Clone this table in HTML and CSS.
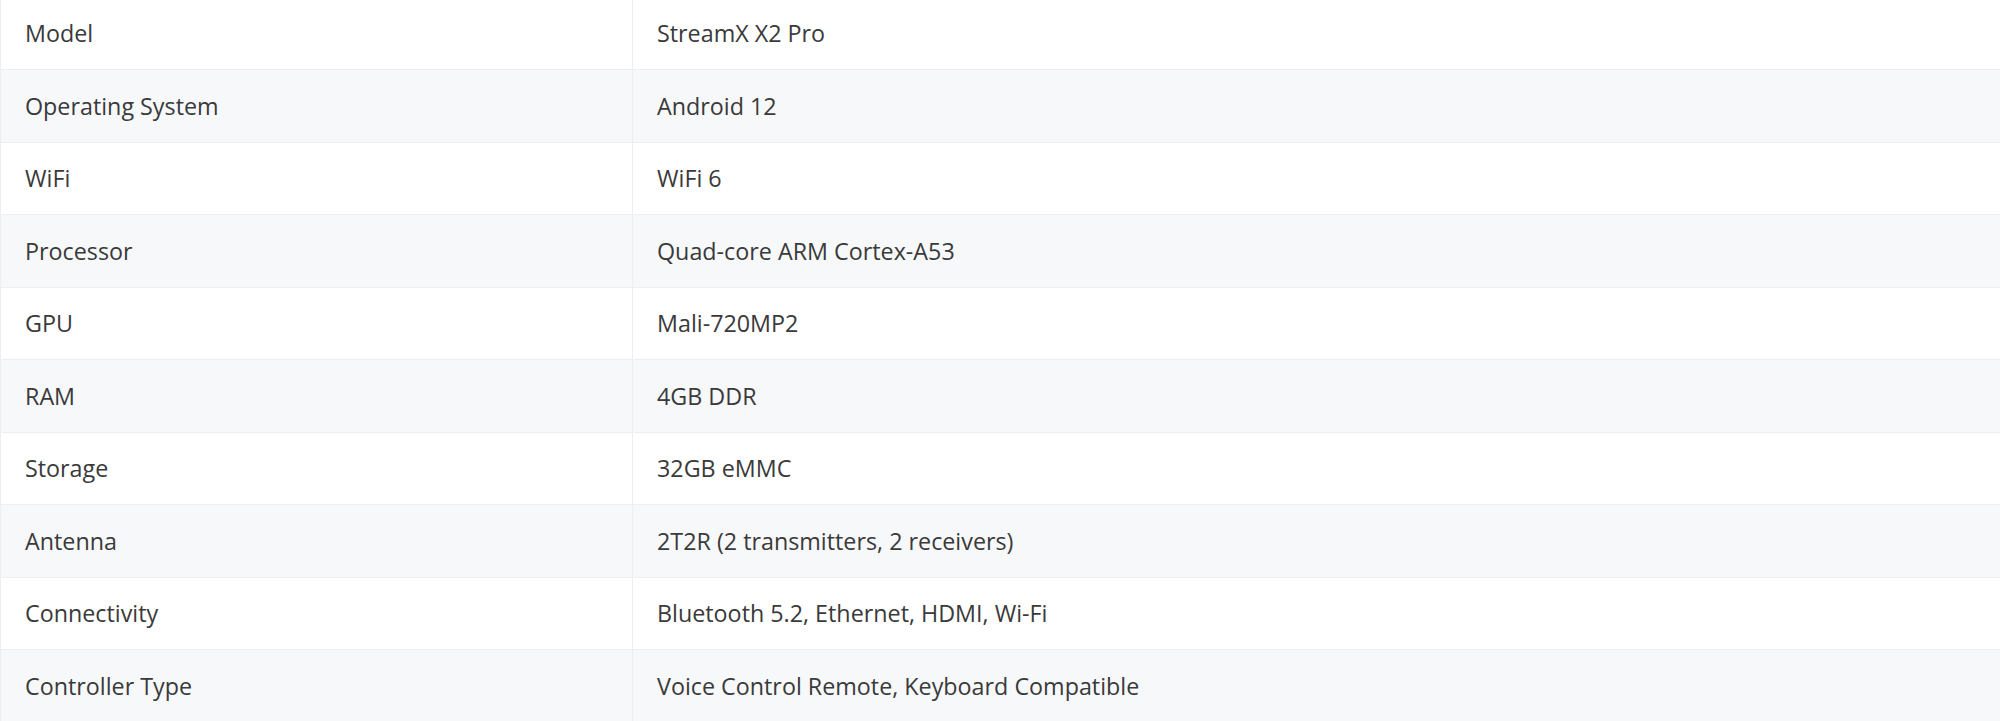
FILE: index.html
```html
<!DOCTYPE html>
<html lang="en">
<head>
<meta charset="utf-8">
<title>Specifications</title>
<link rel="stylesheet" href="styles.css">
</head>
<body>
<div class="specs">
  <div class="row"><div class="key">Model</div><div class="val">StreamX X2 Pro</div></div>
  <div class="row alt"><div class="key">Operating System</div><div class="val">Android 12</div></div>
  <div class="row"><div class="key">WiFi</div><div class="val">WiFi 6</div></div>
  <div class="row alt"><div class="key">Processor</div><div class="val">Quad-core ARM Cortex-A53</div></div>
  <div class="row"><div class="key">GPU</div><div class="val">Mali-720MP2</div></div>
  <div class="row alt"><div class="key">RAM</div><div class="val">4GB DDR</div></div>
  <div class="row"><div class="key">Storage</div><div class="val">32GB eMMC</div></div>
  <div class="row alt"><div class="key">Antenna</div><div class="val">2T2R (2 transmitters, 2 receivers)</div></div>
  <div class="row"><div class="key">Connectivity</div><div class="val">Bluetooth 5.2, Ethernet, HDMI, Wi-Fi</div></div>
  <div class="row alt"><div class="key">Controller Type</div><div class="val">Voice Control Remote, Keyboard Compatible</div></div>
</div>
</body>
</html>
```
FILE: styles.css
```css
html, body {
  margin: 0;
  padding: 0;
  background: #ffffff;
}
body {
  font-family: "Open Sans", "Noto Sans", sans-serif;
  font-size: 23.3px;
  color: #3a3a3a;
  overflow: hidden;
}
.specs {
  margin-top: -3.5px;
  border-top: 1px solid #eceef1;
}
.row {
  display: grid;
  grid-template-columns: 633px 1fr;
  border-bottom: 1px solid #eceef1;
  background: #ffffff;
}
.row.alt {
  background: #f7f8fa;
}
.key, .val {
  min-height: 71.5px;
  display: flex;
  align-items: center;
  box-sizing: border-box;
  padding: 0 24px;
}
.key {
  border-left: 1px solid #eceef1;
  border-right: 1px solid #eceef1;
}
```
